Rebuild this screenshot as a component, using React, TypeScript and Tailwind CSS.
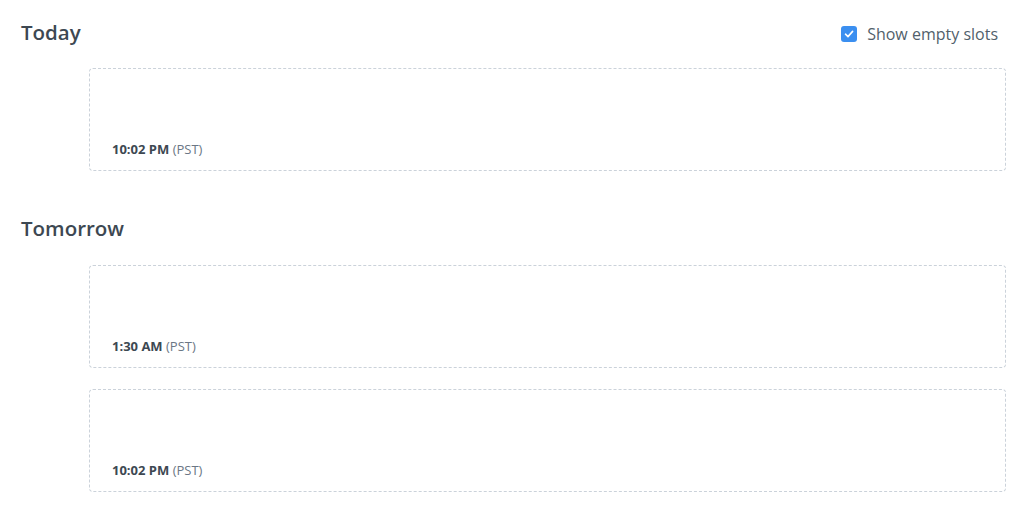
import React from "react";

const Slot = ({ time }: { time: string }) => (
  <div className="ml-[68px] h-[103px] rounded-[4px] border border-dashed border-[#cbd2da] flex items-end px-[22px] pb-[12px]">
    <div className="text-[13px] leading-[18px] text-[#3d4852]">
      <span className="font-bold">{time}</span>{" "}
      <span className="text-[#6b7785]">(PST)</span>
    </div>
  </div>
);

export default function App() {
  return (
    <div
      className="w-[1024px] h-[510px] bg-white pl-[21px] pr-[18px] pt-[18px]"
      style={{ fontFamily: '"Open Sans", sans-serif' }}
    >
      <div className="flex items-start justify-between">
        <h2 className="text-[20.5px] leading-[28px] font-semibold text-[#3d4852]">Today</h2>
        <label className="flex items-center gap-[10px] mt-[5px] mr-[8px]">
          <span className="w-[16px] h-[16px] rounded-[3px] bg-[#3b8ff0] flex items-center justify-center">
            <svg width="10" height="10" viewBox="0 0 10 10" fill="none">
              <path d="M1.5 5.2 L4 7.6 L8.6 2.4" stroke="white" strokeWidth="1.6" strokeLinecap="round" strokeLinejoin="round" />
            </svg>
          </span>
          <span className="text-[16px] leading-[22px] text-[#525f6b]">Show empty slots</span>
        </label>
      </div>
      <div className="mt-[22px] flex flex-col gap-[22px]">
        <Slot time="10:02 PM" />
      </div>
      <h2 className="mt-[43px] text-[20.5px] leading-[28px] font-semibold text-[#3d4852]">Tomorrow</h2>
      <div className="mt-[23px] flex flex-col gap-[21px]">
        <Slot time="1:30 AM" />
        <Slot time="10:02 PM" />
      </div>
    </div>
  );
}
